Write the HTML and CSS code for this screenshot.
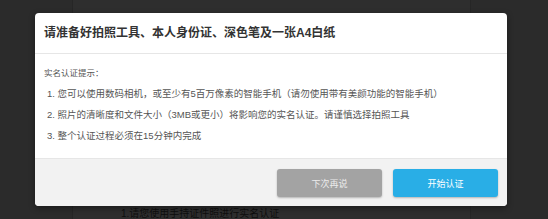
FILE: index.html
```html
<!DOCTYPE html>
<html>
  <head>
    <title>实名认证</title>
    <meta charset="utf-8"/>
    <meta name="viewport" content="width=device-width, initial-scale=1.0"/>
    <link rel="stylesheet" href="styles.css">
  </head>
  <body>
    <div class="page">
      <div class="page-col">
        <p class="page-text">1.请您使用手持证件照进行实名认证</p>
      </div>
    </div>
    <div class="modal">
      <div class="modal-header">请准备好拍照工具、本人身份证、深色笔及一张A4白纸</div>
      <div class="modal-body">
        <div class="tip-title">实名认证提示：</div>
        <ol class="tips">
          <li>1. 您可以使用数码相机，或至少有5百万像素的智能手机（请勿使用带有美颜功能的智能手机）</li>
          <li>2. 照片的清晰度和文件大小（3MB或更小）将影响您的实名认证。请谨慎选择拍照工具</li>
          <li>3. 整个认证过程必须在15分钟内完成</li>
        </ol>
      </div>
      <div class="modal-footer">
        <button class="btn btn-later">下次再说</button>
        <button class="btn btn-start">开始认证</button>
      </div>
    </div>
  </body>
</html>
```

FILE: styles.css
```css
html, body {
  height: 100%;
}
body {
  background: #2b2b2b;
  font-family: "Liberation Sans", "Noto Sans CJK SC", sans-serif;
  margin: 0;
  overflow: hidden;
}
div, button {
  box-sizing: border-box;
}
.page {
  display: flex;
  height: 100%;
}
.page-col {
  background: #2e2e2e;
  border-left: 1px solid #262626;
  border-right: 1px solid #262626;
  height: 100%;
  margin-left: 72px;
  width: 399px;
}
.page-text {
  color: #0e0e0e;
  font-size: 10px;
  margin: 0;
  padding: 205px 0 0 48px;
}

.modal {
  background: #fff;
  border-radius: 4px;
  box-shadow: 0 2px 6px rgba(0, 0, 0, 0.4);
  display: flex;
  flex-direction: column;
  height: 193px;
  left: 35px;
  overflow: hidden;
  position: absolute;
  top: 13px;
  width: 472px;
}
.modal-header {
  border-bottom: 1px solid #e6e6e6;
  color: #333;
  font-size: 12px;
  font-weight: bold;
  height: 41px;
  line-height: 41px;
  padding-left: 9px;
}
.modal-body {
  color: #555;
  flex: 1;
  font-size: 9.5px;
  padding: 12px 9px 0;
}
.tip-title {
  font-size: 8.5px;
  line-height: 14px;
}
.tips {
  list-style: none;
  margin: 3px 0 0;
  padding: 0 0 0 3px;
}
.tips li {
  line-height: 21px;
}
.modal-footer {
  background: #f2f2f2;
  border-top: 1px solid #e6e6e6;
  display: flex;
  gap: 11px;
  height: 48px;
  justify-content: flex-end;
  padding: 10px 9px 0 0;
}
.btn {
  border: none;
  border-radius: 3px;
  box-shadow: 0 1px 2px rgba(0, 0, 0, 0.25);
  color: #fff;
  font-family: "Liberation Sans", "Noto Sans CJK SC", sans-serif;
  font-size: 9px;
  height: 28px;
  padding: 0;
  width: 105px;
}
.btn-later {
  background: #a3a3a3;
  color: #ececec;
}
.btn-start {
  background: #29aee6;
}
```
